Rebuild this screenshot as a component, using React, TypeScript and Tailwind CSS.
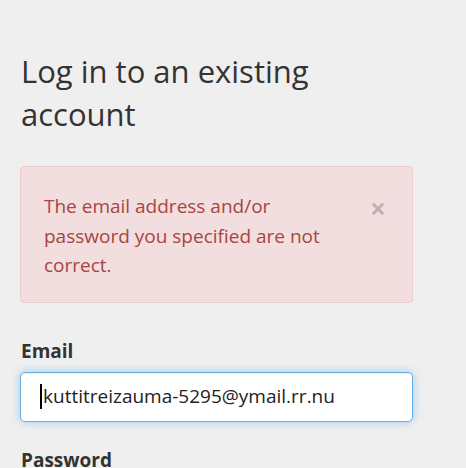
export default function App() {
  return (
    <div
      className="min-h-[468px] w-full bg-[#efefef] px-[20px] pt-[50px] text-[#333333]"
      style={{ fontFamily: '"Open Sans", "Noto Sans", sans-serif' }}
    >
      <div className="w-[393px]">
        <h3 className="m-0 pl-px text-[31px] font-normal leading-[43px]">
          Log in to an existing account
        </h3>

        <div className="mt-[30px] flex items-start justify-between rounded-[4px] border border-[#ebccd1] bg-[#f2dede] px-[23px] pb-[21px] pt-[25px] text-[#a94442]">
          <p className="m-0 w-[300px] text-[19px] leading-[29.5px]">
            The email address and/or password you specified are not correct.
          </p>
          <button
            type="button"
            className="mr-[3px] mt-[2px] text-[28px] font-bold leading-[29px] text-black opacity-20"
          >
            ×
          </button>
        </div>

        <label className="mt-[34px] block pl-px text-[19px] font-bold leading-[28px]">Email</label>
        <div className="mt-[7px] flex h-[50px] items-center rounded-[5px] border border-[#66afe9] bg-white pl-[19px] text-[19px] text-[#222] shadow-[inset_0_1px_1px_rgba(0,0,0,0.075),0_0_8px_rgba(102,175,233,0.6)]">
          <span className="mr-px inline-block h-[25px] w-[2px] bg-black" />
          <span>kuttitreizauma-5295@ymail.rr.nu</span>
        </div>

        <label className="mt-[24px] block pl-px text-[19px] font-bold leading-[28px]">Password</label>
      </div>
    </div>
  );
}
